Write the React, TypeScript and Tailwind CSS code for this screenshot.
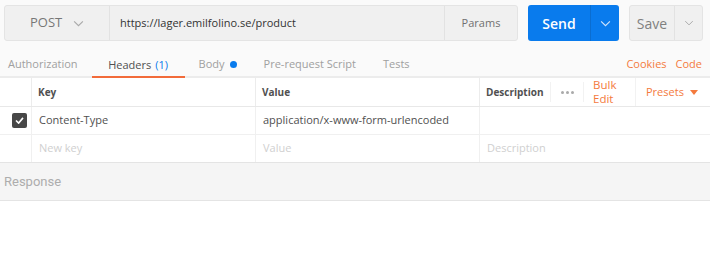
import React from "react";

const Chevron = ({ className }: { className?: string }) => (
  <svg viewBox="0 0 12 8" className={className} fill="none" stroke="currentColor" strokeWidth={1.3}>
    <path d="M1 1.5l5 5 5-5" />
  </svg>
);

export default function App() {
  return (
    <div className="w-[710px] h-[275px] bg-white font-['Open_Sans',sans-serif] overflow-hidden">
      <div className="bg-[#fafafa]">
        {/* Request bar */}
        <div className="flex h-[41px] pt-[5px] pl-[4px] pr-[7px]">
          <div className="flex flex-1 h-[36px] border border-[#e4e4e4] rounded-[3px] bg-[#f0f0f0]">
            <div className="w-[105px] flex items-center pl-[25px] gap-[11px] text-[#777] border-r border-[#e2e2e2]">
              <span className="text-[13px]">POST</span>
              <Chevron className="w-[11px] h-[7px] text-[#aaa]" />
            </div>
            <div className="flex-1 flex items-center pl-[10px] text-[11px] text-[#333]">
              https://lager.emilfolino.se/product
            </div>
            <div className="w-[73px] flex items-center justify-center text-[11px] text-[#707070] border-l border-[#e2e2e2]">
              Params
            </div>
          </div>
          <div className="ml-[10px] flex w-[91px] h-[36px] rounded-[3px] bg-[#097bed] text-white">
            <div className="w-[63px] flex items-center justify-center text-[14px] font-semibold border-r border-[#0a6dd0]">
              Send
            </div>
            <div className="flex-1 flex items-center justify-center">
              <Chevron className="w-[11px] h-[7px] text-[#cfe3fb]" />
            </div>
          </div>
          <div className="ml-[10px] flex w-[74px] h-[36px] rounded-[3px] border border-[#e4e4e4] bg-[#f0f0f0]">
            <div className="w-[45px] flex items-center justify-center text-[14px] text-[#808080] border-r border-[#e2e2e2]">
              Save
            </div>
            <div className="flex-1 flex items-center justify-center">
              <Chevron className="w-[10px] h-[6px] text-[#aaa]" />
            </div>
          </div>
        </div>

        {/* Tabs */}
        <div className="flex items-end h-[37px] text-[11px] border-b-2 border-[#ececec]">
          <div className="pl-[8px] h-[24px] flex items-center text-[#a0a0a0]">Authorization</div>
          <div className="ml-[14px] w-[93px] h-[24px] flex items-center justify-center gap-[4px] text-[#505050] border-b-2 border-[#f26b3a] relative top-[2px]">
            <span>Headers</span>
            <span className="text-[#097bed]">(1)</span>
          </div>
          <div className="ml-[14px] h-[24px] flex items-center gap-[5px] text-[#a0a0a0]">
            <span>Body</span>
            <span className="w-[7px] h-[7px] rounded-full bg-[#097bed]" />
          </div>
          <div className="ml-[27px] h-[24px] flex items-center text-[#a0a0a0]">Pre-request Script</div>
          <div className="ml-[27px] h-[24px] flex items-center text-[#a0a0a0]">Tests</div>
          <div className="ml-auto h-[24px] flex items-center gap-[9px] pr-[8px] text-[#f47a3d]">
            <span>Cookies</span>
            <span>Code</span>
          </div>
        </div>
      </div>

      {/* Headers table */}
      <div className="text-[11px]">
        <div className="flex h-[29px] bg-white border-b border-[#e8e8e8]">
          <div className="w-[32px] border-r border-[#ececec]" />
          <div className="w-[224px] flex items-center pl-[6px] text-[10px] font-bold text-[#505050] border-r border-[#ececec]">Key</div>
          <div className="w-[224px] flex items-center pl-[6px] text-[10px] font-bold text-[#505050] border-r border-[#ececec]">Value</div>
          <div className="w-[71px] flex items-center pl-[6px] text-[10px] font-bold text-[#505050] border-r border-[#f2f2f2] my-[4px]">Description</div>
          <div className="w-[33px] flex items-center justify-center gap-[2px] border-r border-[#f2f2f2] my-[4px]">
            <span className="w-[3px] h-[3px] rounded-full bg-[#aaa]" />
            <span className="w-[3px] h-[3px] rounded-full bg-[#aaa]" />
            <span className="w-[3px] h-[3px] rounded-full bg-[#aaa]" />
          </div>
          <div className="w-[52px] flex flex-col justify-center pl-[9px] leading-[14px] text-[11.5px] text-[#f47a3d] border-r border-[#f2f2f2]">
            <span className="block">Bulk</span>
            <span className="block">Edit</span>
          </div>
          <div className="flex items-center gap-[6px] pl-[10px] text-[#f47a3d]">
            <span>Presets</span>
            <svg viewBox="0 0 8 5" className="w-[8px] h-[5px]">
              <path d="M0 0h8L4 5z" fill="#f47a3d" />
            </svg>
          </div>
        </div>

        <div className="flex h-[28px] bg-white border-b border-[#f0f0f0]">
          <div className="w-[32px] flex items-center pl-[12px] border-r border-[#f0f0f0]">
            <div className="w-[15px] h-[15px] rounded-[2px] bg-[#474747] flex items-center justify-center">
              <svg viewBox="0 0 10 8" className="w-[9px] h-[7px]" fill="none" stroke="white" strokeWidth={1.8}>
                <path d="M1 4l3 3 5-6" />
              </svg>
            </div>
          </div>
          <div className="w-[224px] flex items-center pl-[7px] text-[#505050] border-r border-[#f0f0f0]">Content-Type</div>
          <div className="w-[224px] flex items-center pl-[7px] text-[#505050] border-r border-[#f0f0f0]">application/x-www-form-urlencoded</div>
          <div className="flex-1" />
        </div>

        <div className="flex h-[28px] bg-white border-b border-[#e4e4e4]">
          <div className="w-[32px] border-r border-[#f0f0f0]" />
          <div className="w-[224px] flex items-center pl-[7px] text-[#d0d0d0] border-r border-[#f0f0f0]">New key</div>
          <div className="w-[224px] flex items-center pl-[7px] text-[#d0d0d0] border-r border-[#f0f0f0]">Value</div>
          <div className="flex-1 flex items-center pl-[7px] text-[#d0d0d0]">Description</div>
        </div>
      </div>

      {/* Response */}
      <div className="h-[38px] bg-[#f5f5f5] border-b border-[#e4e4e4] flex items-center pl-[4px] text-[13px] text-[#adadad] font-['Roboto',sans-serif]">
        Response
      </div>
    </div>
  );
}
